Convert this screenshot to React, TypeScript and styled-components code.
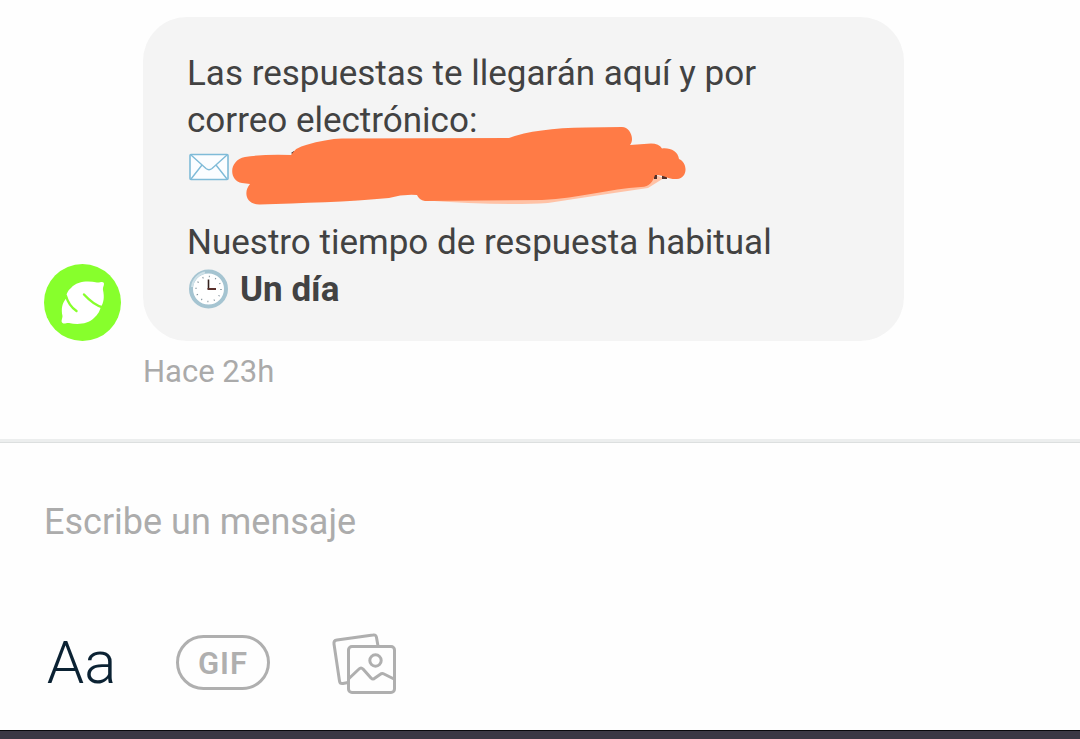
import React from "react";
import styled, { createGlobalStyle } from "styled-components";

const GlobalStyle = createGlobalStyle`
  *, *::before, *::after { box-sizing: border-box; }
  body {
    margin: 0;
    background: #fefefe;
    font-family: Roboto, "Liberation Sans", sans-serif;
  }
`;

const Screen = styled.main`
  display: flex;
  flex-direction: column;
  min-height: 100vh;
`;

const Conversation = styled.section`
  flex: 1;
  padding: 17px 44px 43px;
`;

const MessageRow = styled.article`
  display: flex;
  align-items: flex-end;
  gap: 22px;
`;

const Avatar = styled.svg`
  flex: none;
  width: 77px;
  height: 77px;
`;

const Bubble = styled.div`
  flex: 0 1 761px;
  padding: 33px 44px 28px;
  border-radius: 44px;
  background: #f4f4f4;
  color: #424242;
  font-size: 35px;
  line-height: 47px;
`;

const Paragraph = styled.p`
  margin: 0;

  & + & {
    margin-top: 28px;
  }
`;

const IconLine = styled.span`
  position: relative;
  display: flex;
  align-items: center;
  gap: 11px;
  height: 47px;
`;

const LineIcon = styled.svg`
  flex: none;
  width: 42px;
  height: 42px;
`;

const Scribble = styled.svg`
  position: absolute;
  left: 40px;
  top: -22px;
  width: 470px;
  height: 90px;
`;

const Timestamp = styled.time`
  display: block;
  margin: 12px 0 0 99px;
  color: #aaaaaa;
  font-size: 31px;
  line-height: 38px;
`;

const Composer = styled.form`
  border-top: 3px solid #eceeee;
  box-shadow: inset 0 1px #dcdfdf;
  padding: 57px 44px 34px;
`;

const MessageInput = styled.input`
  display: block;
  width: 100%;
  height: 47px;
  padding: 0;
  border: 0;
  outline: 0;
  background: transparent;
  color: #424242;
  font: 36px/47px Roboto, "Liberation Sans", sans-serif;

  &::placeholder {
    color: #acacac;
    opacity: 1;
  }
`;

const Toolbar = styled.div`
  display: flex;
  align-items: center;
  gap: 60px;
  margin-top: 82px;
`;

const ToolButton = styled.button`
  display: flex;
  align-items: center;
  justify-content: center;
  height: 68px;
  padding: 0;
  border: 0;
  background: transparent;
  font-family: inherit;
`;

const TextButton = styled(ToolButton)`
  width: 72px;
  padding: 2px 0 0 3px;
  color: #0b2233;
  font-size: 60px;
  font-weight: 300;
  line-height: 66px;
`;

const GifBadge = styled.span`
  width: 94px;
  height: 55px;
  border: 3px solid #afafaf;
  border-radius: 28px;
  color: #afafaf;
  font-size: 31px;
  font-weight: 600;
  line-height: 52px;
  letter-spacing: 1px;
`;

const GalleryIcon = styled.svg`
  width: 70px;
  height: 66px;
`;

const SystemBar = styled.footer`
  height: 9px;
  border-top: 1px solid #08080c;
  background: #3a3744;
`;

export default function App() {
  return (
    <>
      <GlobalStyle />
      <Screen>
        <Conversation>
          <MessageRow>
            <Avatar viewBox="0 0 77 77" role="img" aria-label="Avatar">
              <circle cx="38.5" cy="38.5" r="38.5" fill="#87ff2c" />
              <path
                d="M59.5 18.5C58 17 55.500 19 53 18.500C44 16.500 33 17 27 24C23 27.500 22 31 22.500 34C18 39 17 45 18.500 52C18.500 55 16.500 57 18.500 59C20.500 60.500 22.500 58.500 25 59C34 61 44 60 50 54C54.500 50 55.500 47 56.500 44C60 38 60.500 33 59 26C58.500 23 61 20.500 59.5 18.500Z"
                fill="#fff"
              />
              <path
                d="M22 32C24 39 28 44 32.500 47M40 30.500C46 37 51 41.500 59 43.500"
                fill="none"
                stroke="#87ff2c"
                strokeWidth="2.4"
                strokeLinecap="round"
              />
            </Avatar>
            <Bubble>
              <Paragraph>
                Las respuestas te llegarán aquí y por correo electrónico:
                <IconLine>
                  <LineIcon viewBox="-1 1 42 42" role="img" aria-label="Correo">
                    <rect x="2" y="8.500" width="38" height="25" rx="1" fill="#fbfdff" stroke="#7fbbd8" strokeWidth="1.600" />
                    <path
                      d="M3 9L18 22.500Q21 25 24 22.500L39 9M3 33L14 19M39 33L28 19"
                      fill="none"
                      stroke="#7fbbd8"
                      strokeWidth="1.400"
                    />
                  </LineIcon>
                  <Scribble viewBox="227 122 470 90" aria-hidden="true">
                    <path d="M420 200Q500 206 548 203Q600 195 648 188L664 178L640 170Z" fill="#ffc2a6" />
                    <path d="M654 172h3v7h-3zM662 175h5v4h-5zM291 153l3-2v4z" fill="#51312b" />
                    <path
                      d="M245 157Q264 154 291 155Q296 147 306 145Q326 139 342 138.500L509 138Q536 128 586 127.500L622 127C630 127 635 139 630 145L651 143.500Q659 143.500 662 148.500C670 147.500 678 151 679 159C688 163 688 178 677 179C669 180 663 174 655 175C653 181 650 187 641 187C609 189 580 198 542 200L425 201Q419 200 417 195Q403 194 389 198C350 202 300 203 260 204.500C246 205 243 192 250 184L242 183C228 180 229 160 245 157Z"
                      fill="#ff7b46"
                    />
                  </Scribble>
                </IconLine>
              </Paragraph>
              <Paragraph>
                Nuestro tiempo de respuesta habitual
                <IconLine>
                  <LineIcon viewBox="-0.500 1 42 42" aria-hidden="true">
                    <circle cx="21" cy="21" r="17.500" fill="#fff" stroke="#a5c4d1" strokeWidth="4" />
                    <path d="M4.500 19A17 17 0 0 1 17.500 4.500" fill="none" stroke="#cfe1e8" strokeWidth="2" />
                    <circle cx="21" cy="21" r="12.500" fill="none" stroke="#81919a" strokeWidth="1.500" strokeDasharray="1 5.545" />
                    <path d="M21 11.500V21" stroke="#34221f" strokeWidth="1.600" />
                    <path d="M20 21H28.500" stroke="#5a302b" strokeWidth="2" />
                  </LineIcon>
                  <strong>Un día</strong>
                </IconLine>
              </Paragraph>
            </Bubble>
          </MessageRow>
          <Timestamp>Hace 23h</Timestamp>
        </Conversation>
        <Composer onSubmit={(event) => event.preventDefault()}>
          <MessageInput type="text" aria-label="Escribe un mensaje" placeholder="Escribe un mensaje" />
          <Toolbar>
            <TextButton type="button">Aa</TextButton>
            <ToolButton type="button">
              <GifBadge>GIF</GifBadge>
            </ToolButton>
            <ToolButton type="button" aria-label="Galería">
              <GalleryIcon viewBox="330 629 70 66" fill="none" stroke="#afafaf" strokeWidth="3" strokeLinejoin="round">
                <rect x="348.500" y="646.500" width="46" height="46" rx="3.500" />
                <path d="M378 646L376.500 637.500Q376 634.500 373 635L337 640Q333.500 640.500 334 644L339.500 681Q340 684 343 683.500L348 682.500" />
                <circle cx="375.500" cy="660.500" r="5.700" />
                <path d="M349 678.500L359 669Q361 667 363 669L371 678Q373 680 375 678L380 674.500Q382 673 384 674L394 679" />
              </GalleryIcon>
            </ToolButton>
          </Toolbar>
        </Composer>
        <SystemBar />
      </Screen>
    </>
  );
}
